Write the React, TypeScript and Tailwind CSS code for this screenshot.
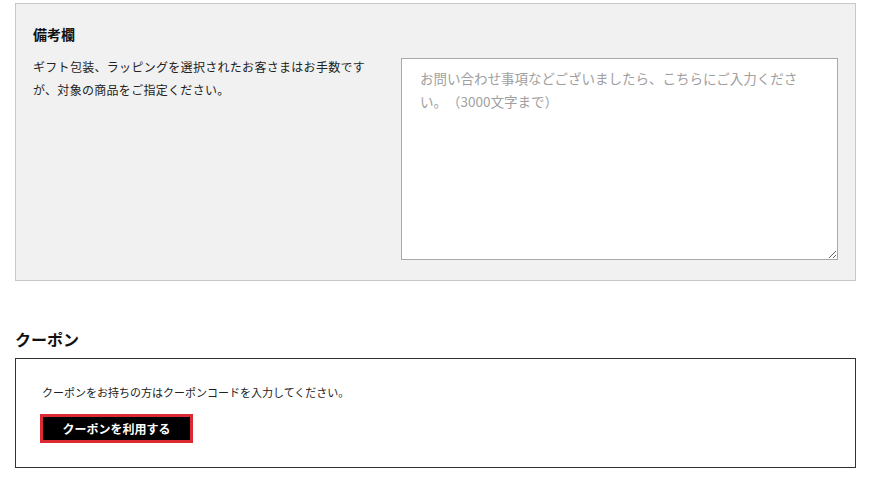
import React from "react";

export default function App() {
  const font = { fontFamily: '"Noto Sans CJK JP", "Noto Sans", sans-serif' };
  return (
    <div className="w-[872px] h-[481px] bg-white overflow-hidden text-[#222] [text-spacing-trim:space-all]" style={font}>
      <div className="pt-[3px] pl-[15px] w-[856px]">
        <div className="border border-[#c8c8c8] bg-[#f1f1f1] pl-[17px] pr-[17px] pt-[20px] pb-[20px]">
          <h3 className="text-[14px] font-bold leading-[20px] text-[#111]">備考欄</h3>
          <div className="flex mt-[14px]">
            <p className="w-[368px] shrink-0 pr-[30px] text-[12px] tracking-[0.3px] leading-[23px] text-[#222] -mt-[3px]">
              ギフト包装、ラッピングを選択されたお客さまはお手数ですが、対象の商品をご指定ください。
            </p>
            <textarea
              className="flex-1 h-[202px] border border-[#a8a8a8] bg-white px-[18px] py-[8px] text-[13.5px] leading-[23px] text-[#333] placeholder:text-[#a0a0a0] outline-none [text-spacing-trim:space-all]"
              placeholder="お問い合わせ事項などございましたら、こちらにご入力ください。（3000文字まで）"
              style={font}
            />
          </div>
        </div>
        <h2 className="mt-[47px] text-[16px] font-bold leading-[22px] text-[#111]">クーポン</h2>
        <div className="mt-[8px] border border-[#333] px-[26px] pt-[26px] pb-[24px]">
          <p className="text-[11px] leading-[14px] text-[#222]">
            クーポンをお持ちの方はクーポンコードを入力してください。
          </p>
          <button
            className="mt-[15px] -ml-[2px] w-[153px] h-[29px] border-[3px] border-[#dc2a33] bg-black text-white text-[12px] font-bold leading-none flex items-center justify-center"
            style={font}
          >
            クーポンを利用する
          </button>
        </div>
      </div>
    </div>
  );
}
